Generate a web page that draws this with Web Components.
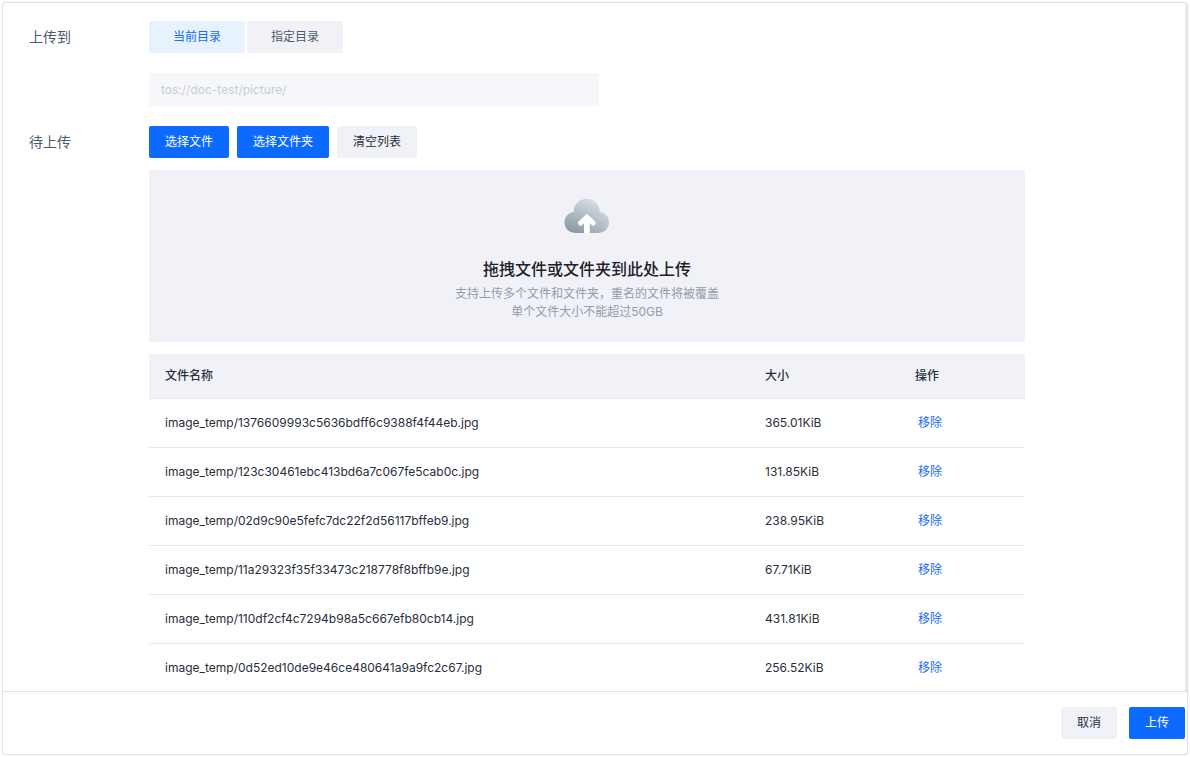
<!DOCTYPE html>
<html lang="zh-CN">
<head>
<meta charset="utf-8">
<title>上传文件</title>
<style>
  html { height: 100%; }
  body {
    box-sizing: border-box;
    height: 100%;
    margin: 0;
    padding: 3px;
    background: #fff;
    color: #272e3b;
    font: 12px/20px Inter, "Noto Sans CJK SC", sans-serif;
  }
</style>
</head>
<body>
<upload-dialog>
  <form-row label="上传到">
    <segment-switch></segment-switch>
    <path-input value="tos://doc-test/picture/"></path-input>
  </form-row>
  <form-row label="待上传">
    <button-bar>
      <ui-button kind="primary">选择文件</ui-button>
      <ui-button kind="primary">选择文件夹</ui-button>
      <ui-button>清空列表</ui-button>
    </button-bar>
    <drop-zone>
      <span slot="title">拖拽文件或文件夹到此处上传</span>
      支持上传多个文件和文件夹，重名的文件将被覆盖<br>单个文件大小不能超过50GB
    </drop-zone>
    <file-table></file-table>
  </form-row>
  <ui-button slot="footer">取消</ui-button>
  <ui-button slot="footer" kind="primary">上传</ui-button>
</upload-dialog>

<script>
  const define = (name, html, setup) => {
    const template = document.createElement('template');
    template.innerHTML = html;
    customElements.define(name, class extends HTMLElement {
      constructor() {
        super();
        this.attachShadow({ mode: 'open' }).append(template.content.cloneNode(true));
      }
      connectedCallback() {
        if (setup) setup(this, this.shadowRoot);
      }
    });
  };

  define('upload-dialog', `
    <style>
      :host {
        display: flex; flex-direction: column; height: 100%;
        background: #fff; border-radius: 3px;
        box-shadow: 0 0 0 1px #e1e2e4, 0 0 3px rgba(0, 0, 0, .16);
      }
      main {
        flex: 1; min-height: 0; box-sizing: border-box;
        display: flex; flex-direction: column; gap: 20px;
        padding: 18px 160px 18px 26px;
        overflow-y: auto; scrollbar-width: none;
        border-right: 2px solid #eaebf3;
      }
      footer {
        display: flex; justify-content: flex-end; gap: 12px;
        padding: 15px 2px; border-top: 1px solid #e2e3e8;
      }
    </style>
    <main><slot></slot></main>
    <footer><slot name="footer"></slot></footer>`);

  define('form-row', `
    <style>
      :host { display: block; }
      .row { display: grid; grid-template-columns: 120px minmax(0, 1fr); }
      .label { font-size: 14px; line-height: 32px; color: #4e5969; }
      .content { display: flex; flex-direction: column; }
    </style>
    <div class="row" role="group" aria-labelledby="label">
      <div class="label" id="label"></div>
      <div class="content"><slot></slot></div>
    </div>`,
    (el, root) => { root.querySelector('.label').textContent = el.getAttribute('label'); });

  define('segment-switch', `
    <style>
      :host { display: flex; gap: 2px; margin-bottom: 20px; }
      label {
        box-sizing: border-box; min-width: 96px; padding: 0 20px;
        line-height: 32px; text-align: center; border-radius: 2px;
        background: #f1f2f8; color: #4e5969; cursor: pointer;
      }
      label:has(:checked) { background: #e6f3ff; color: #1668ff; }
      label:has(:focus-visible) { outline: 2px solid #8ab8ff; }
      input { appearance: none; position: absolute; margin: 0; }
    </style>
    <label><input type="radio" name="target" checked>当前目录</label>
    <label><input type="radio" name="target">指定目录</label>`);

  define('path-input', `
    <style>
      :host { display: block; max-width: 450px; }
      input {
        display: block; box-sizing: border-box; width: 100%; height: 33px;
        padding: 0 12px; border: 0; border-radius: 2px;
        background: #f6f7fb; color: #c9cdd4; font: inherit;
      }
    </style>
    <input type="text" aria-label="目录路径" disabled>`,
    (el, root) => { root.querySelector('input').value = el.getAttribute('value'); });

  define('button-bar', `
    <style>:host { display: flex; gap: 8px; margin-bottom: 12px; }</style>
    <slot></slot>`);

  define('ui-button', `
    <style>
      :host { display: inline-block; }
      button {
        display: block; height: 32px; padding: 0 16px; border: 0; border-radius: 2px;
        background: #f1f2f8; color: #272e3b; font: inherit; cursor: pointer;
      }
      :host([kind="primary"]) button { background: #0d6aff; color: #fff; }
    </style>
    <button type="button"><slot></slot></button>`);

  define('cloud-icon', `
    <style>:host { display: block; } svg { display: block; }</style>
    <svg width="48" height="48" viewBox="0 0 48 48" aria-hidden="true">
      <defs>
        <linearGradient id="back" x1="0.75" y1="0" x2="0.35" y2="1">
          <stop offset="0" stop-color="#d8dee3"/><stop offset="1" stop-color="#8c9aa6"/>
        </linearGradient>
        <linearGradient id="front" x1="0.8" y1="0" x2="0.2" y2="1">
          <stop offset="0" stop-color="#ced5db"/><stop offset="1" stop-color="#a0abb6"/>
        </linearGradient>
      </defs>
      <path fill="url(#back)" d="M11.7 41A10.7 10.7 0 0 1 10.7 19.7A13 13 0 0 1 36.7 19.8L36 41Z"/>
      <path fill="url(#front)" d="M25 41V30.4A10.6 10.6 0 1 1 35.7 41Z"/>
      <path fill="none" stroke="#fff" stroke-width="5" stroke-linecap="round" stroke-linejoin="round" d="M17.6 31L23.9 25L30.2 31"/>
      <path fill="#fff" d="M21 25.5H26.8V41H21Z"/>
    </svg>`);

  define('drop-zone', `
    <style>
      :host {
        display: flex; flex-direction: column; align-items: center;
        padding: 22px 16px 21px; margin-bottom: 12px; border-radius: 2px;
        background: #f1f2f8; text-align: center;
      }
      h2 { margin: 17px 0 4px; font-size: 16px; line-height: 24px; font-weight: 500; color: #1d2129; }
      p { margin: 0; line-height: 18px; color: #939ba8; }
    </style>
    <cloud-icon></cloud-icon>
    <h2><slot name="title"></slot></h2>
    <p><slot></slot></p>`);

  const files = [
    ['image_temp/1376609993c5636bdff6c9388f4f44eb.jpg', '365.01KiB'],
    ['image_temp/123c30461ebc413bd6a7c067fe5cab0c.jpg', '131.85KiB'],
    ['image_temp/02d9c90e5fefc7dc22f2d56117bffeb9.jpg', '238.95KiB'],
    ['image_temp/11a29323f35f33473c218778f8bffb9e.jpg', '67.71KiB'],
    ['image_temp/110df2cf4c7294b98a5c667efb80cb14.jpg', '431.81KiB'],
    ['image_temp/0d52ed10de9e46ce480641a9a9fc2c67.jpg', '256.52KiB']
  ];

  define('file-table', `
    <style>
      :host { display: block; }
      table { width: 100%; table-layout: fixed; border-collapse: separate; border-spacing: 0; }
      th, td {
        box-sizing: border-box; padding: 0 16px; text-align: left;
        border-bottom: 1px solid #e5e6ee;
      }
      th { height: 45px; font-weight: 500; background: #f1f2f8; }
      th:first-child { border-top-left-radius: 2px; }
      th:last-child { border-top-right-radius: 2px; }
      td { height: 49px; }
      .size { width: 150px; }
      .action { width: 126px; }
      button { padding: 0 3px; border: 0; background: none; color: #1668ff; font: inherit; cursor: pointer; }
    </style>
    <table>
      <thead><tr><th>文件名称</th><th class="size">大小</th><th class="action">操作</th></tr></thead>
      <tbody></tbody>
    </table>`,
    (el, root) => {
      const body = root.querySelector('tbody');
      body.replaceChildren();
      for (const [name, size] of files) {
        const row = body.insertRow();
        row.insertCell().textContent = name;
        row.insertCell().textContent = size;
        const remove = document.createElement('button');
        remove.type = 'button';
        remove.textContent = '移除';
        remove.addEventListener('click', () => row.remove());
        row.insertCell().append(remove);
      }
    });
</script>
</body>
</html>
